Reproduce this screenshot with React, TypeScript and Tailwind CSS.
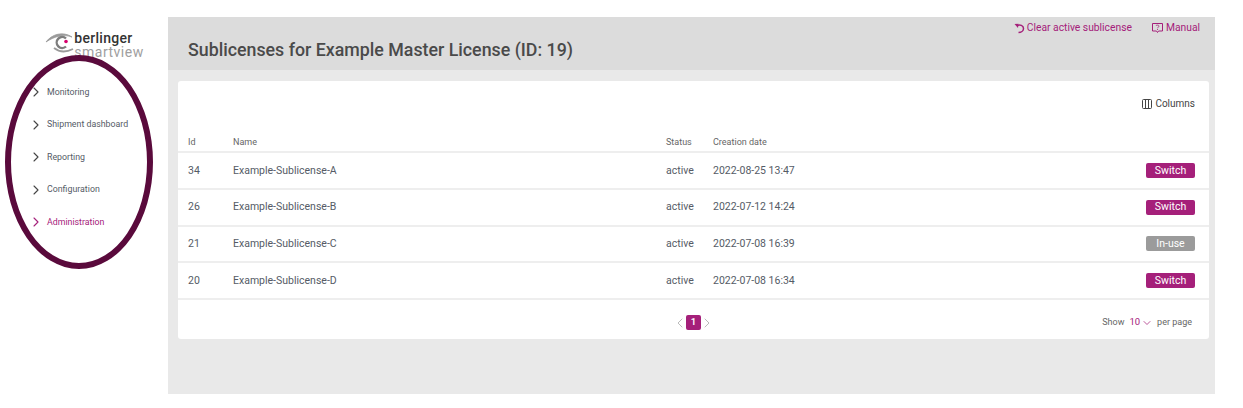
import { ChevronDown, ChevronLeft, ChevronRight } from "lucide-react";

const menu = ["Monitoring", "Shipment dashboard", "Reporting", "Configuration", "Administration"];

const rows = [
  { id: 34, name: "Example-Sublicense-A", status: "active", date: "2022-08-25 13:47", inUse: false },
  { id: 26, name: "Example-Sublicense-B", status: "active", date: "2022-07-12 14:24", inUse: false },
  { id: 21, name: "Example-Sublicense-C", status: "active", date: "2022-07-08 16:39", inUse: true },
  { id: 20, name: "Example-Sublicense-D", status: "active", date: "2022-07-08 16:34", inUse: false },
];

function Logo() {
  return (
    <div className="flex items-start">
      <svg width="29" height="24" viewBox="0 0 29 24" fill="none" className="-ml-[1px]">
        <path d="M1 11 C7 3 18 0 27 6 C19 3 10 5 1 11 Z" fill="#9a9a9a" stroke="#9a9a9a" strokeWidth="0.8" />
        <path d="M9 17 C14 21 20 22 28 18" stroke="#9a9a9a" strokeWidth="1.8" />
        <path d="M21 7.5 A5.5 5.5 0 1 0 21 15.5" stroke="#7d7d7d" strokeWidth="2.4" />
        <circle cx="21" cy="10.5" r="1.8" fill="#d6006e" />
      </svg>
      <div className="flex flex-col pt-[1px]">
        <span className="h-[14px] text-[14px] leading-[13px] font-medium tracking-[0.3px] text-[#333333]">berlinger</span>
        <span className="text-[14px] leading-[12px] tracking-[0.5px] text-[#a0a0a0]">smartview</span>
      </div>
    </div>
  );
}

function UndoIcon() {
  return (
    <svg width="11" height="11" viewBox="0 0 11 11" fill="none">
      <path d="M0.5 1 L4.5 0.8 L4 5 Z" fill="currentColor" />
      <path d="M3 2.5 C6 1 9.5 2.5 9.5 5.5 C9.5 8 7 9.5 4.5 9.5" stroke="currentColor" strokeWidth="1.5" />
    </svg>
  );
}

function ManualIcon() {
  return (
    <svg width="11" height="10" viewBox="0 0 11 10" fill="none" stroke="currentColor" strokeWidth="1">
      <path d="M0.5 0.5 H10.5 V8 H6.5 L5.5 9.5 L4.5 8 H0.5 Z" />
      <path d="M4 3 C4 1.8 7 1.8 7 3.2 C7 4.2 5.5 4.2 5.5 5.2 M5.5 6 V7" strokeWidth="0.8" />
    </svg>
  );
}

function ColumnsIcon() {
  return (
    <svg width="10" height="10" viewBox="0 0 10 10" fill="none" stroke="currentColor" strokeWidth="1">
      <rect x="0.5" y="0.5" width="9" height="9" rx="1" />
      <path d="M3.5 0.5 V9.5 M6.5 0.5 V9.5" />
    </svg>
  );
}

export default function App() {
  return (
    <div className="relative flex h-[408px] w-[1243px] bg-white pt-[17px] pb-[14px] font-['Roboto',sans-serif]">
      <aside className="flex w-[168px] shrink-0 flex-col">
        <div className="flex h-[51px] justify-center pt-[14px] pl-[22px]">
          <Logo />
        </div>
        <nav className="flex flex-col pt-[8px] pl-[28px]">
          {menu.map((item) => (
            <div
              key={item}
              className={`flex h-[32.5px] items-center gap-[3px] text-[8.8px] ${item === "Administration" ? "text-[#a5207a]" : "text-[#555b66]"}`}
            >
              <ChevronRight size={16} strokeWidth={1.6} className={item === "Administration" ? "" : "text-[#444444]"} />
              {item}
            </div>
          ))}
        </nav>
      </aside>

      <main className="flex w-[1047px] flex-col bg-[#e9e9e9]">
        <header className="flex h-[53px] justify-between bg-[#dcdcdc] pr-[15px] pl-[20px]">
          <h1 className="pt-[21px] text-[17.8px] leading-[24px] font-medium text-[#4a4a4a]">
            Sublicenses for Example Master License (ID: 19)
          </h1>
          <div className="flex items-start gap-[20px] pt-[4px] text-[10.3px] leading-[14px] text-[#a5207a]">
            <span className="flex items-center gap-[2px]">
              <UndoIcon />
              Clear active sublicense
            </span>
            <span className="flex items-center gap-[3px]">
              <ManualIcon />
              Manual
            </span>
          </div>
        </header>

        <section className="mt-[11px] mr-[6px] ml-[10px] h-[258px] rounded-[3px] bg-white">
          <div className="flex h-[53px] items-start justify-end pt-[16px] pr-[14px] text-[10px] leading-[14px] text-[#444444]">
            <span className="flex items-center gap-[3px]">
              <ColumnsIcon />
              Columns
            </span>
          </div>
          <div className="grid h-[19px] grid-cols-[45px_433px_47px_1fr] items-center border-b-2 border-[#eeeeee] pl-[10px] text-[9px] text-[#666666]">
            <span>Id</span>
            <span>Name</span>
            <span>Status</span>
            <span>Creation date</span>
          </div>
          {rows.map((row) => (
            <div
              key={row.id}
              className="grid h-[36.75px] grid-cols-[45px_433px_47px_1fr_auto] items-center border-b-2 border-[#eeeeee] pr-[14px] pl-[10px] text-[10.5px] text-[#555b66]"
            >
              <span>{row.id}</span>
              <span>{row.name}</span>
              <span>{row.status}</span>
              <span>{row.date}</span>
              <span
                className={`flex h-[15px] w-[49px] items-center justify-center rounded-[2px] text-[10.5px] text-white ${row.inUse ? "bg-[#9b9b9b]" : "bg-[#a5207a]"}`}
              >
                {row.inUse ? "In-use" : "Switch"}
              </span>
            </div>
          ))}
          <div className="relative flex h-[40px] items-center justify-center pt-[5px]">
            <div className="flex items-center text-[#aaaaaa]">
              <ChevronLeft size={16} strokeWidth={1.2} className="-mr-[2px]" />
              <span className="flex h-[15px] w-[15px] items-center justify-center rounded-[2px] bg-[#a5207a] text-[9.5px] font-semibold text-white">
                1
              </span>
              <ChevronRight size={16} strokeWidth={1.2} className="-ml-[2px]" />
            </div>
            <div className="absolute right-[17px] flex items-center text-[9px] text-[#666666]">
              Show
              <span className="ml-[5px] flex items-center gap-[1px] text-[9.5px] text-[#a5207a]">
                10
                <ChevronDown size={12} strokeWidth={1.5} />
              </span>
              <span className="ml-[4px]">per page</span>
            </div>
          </div>
        </section>
      </main>

      {/* annotation drawn over the sidebar */}
      <div className="absolute top-[55px] left-[5px] h-[214px] w-[148px] rounded-[50%] border-[6px] border-[#5a0a3c]" />
    </div>
  );
}
